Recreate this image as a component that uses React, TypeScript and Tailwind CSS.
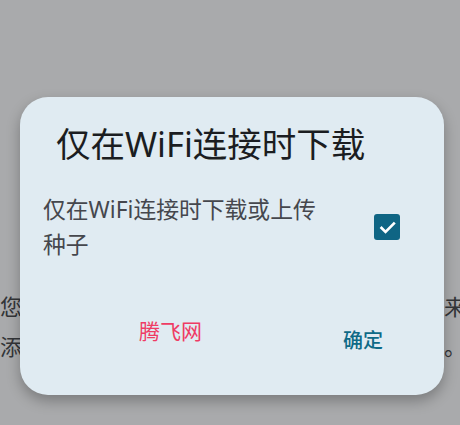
import React from "react";

const font = { fontFamily: '"Noto Sans", "Noto Sans CJK SC", sans-serif' };

export default function App() {
  return (
    <div
      className="relative w-[460px] h-[425px] overflow-hidden bg-[#a9aaac]"
      style={font}
    >
      <div className="pt-[286px] text-[22px] leading-[40px] text-[#333538] whitespace-nowrap tracking-[0.2px]">
        <p>您还没有添加任何种子，请点击右下角的按钮来</p>
        <p>添加种子或者磁力链接，开始您的下载之旅吧。</p>
      </div>

      <div className="absolute left-[20px] top-[97px] w-[424px] h-[298px] rounded-[28px] bg-[#e0ebf2] shadow-[0_6px_14px_rgba(0,0,0,0.28)] flex flex-col">
        <h1 className="pl-[36px] pt-[27px] text-[34.5px] leading-[40px] text-[#1b1d21] font-normal whitespace-nowrap">
          仅在WiFi连接时下载
        </h1>
        <div className="flex items-center pl-[23px] pr-[44px] mt-[28px]">
          <p className="w-[295px] text-[22.8px] leading-[35px] text-[#45474d]">
            仅在WiFi连接时下载或上传种子
          </p>
          <div className="ml-auto w-[26px] h-[26px] rounded-[3px] bg-[#0f6584] flex items-center justify-center">
            <svg width="19" height="19" viewBox="0 0 24 24" fill="none">
              <path
                d="M4.5 12.5l5 5L20 7"
                stroke="white"
                strokeWidth="3.4"
                strokeLinecap="square"
              />
            </svg>
          </div>
        </div>
        <div className="flex items-start mt-[55px] pl-[119px] pr-[61px]">
          <span className="text-[21px] leading-[28px] text-[#ef3b64]">腾飞网</span>
          <span className="ml-auto mt-[10px] text-[20px] leading-[28px] text-[#0e6a87] font-medium">
            确定
          </span>
        </div>
      </div>
    </div>
  );
}
